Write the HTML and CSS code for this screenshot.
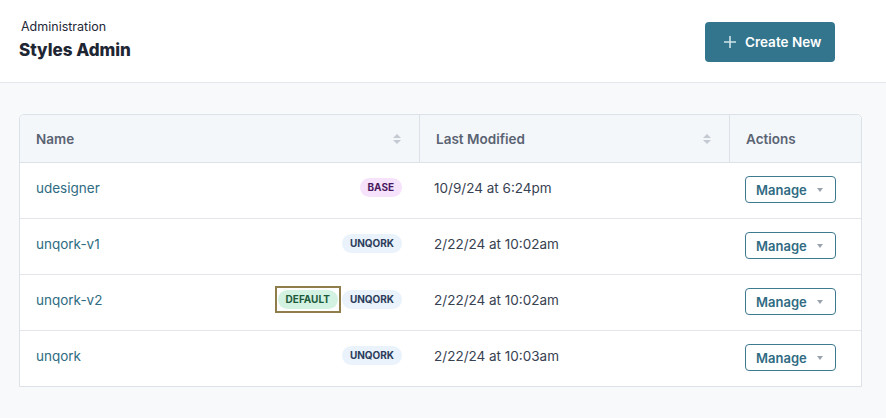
FILE: index.html
```html
<!DOCTYPE html>
<html>
<head>
    <meta charset="UTF-8">
    <title>Styles Admin</title>
    <link rel="stylesheet" href="styles.css">
</head>
<body>
<header class="page-header">
    <div class="titles">
        <div class="eyebrow">Administration</div>
        <h1>Styles Admin</h1>
    </div>
    <button class="btn-create">
        <svg width="14" height="14" viewBox="0 0 14 14"><path d="M7 1v12M1 7h12" stroke="#cfe3ea" stroke-width="1.6" fill="none"/></svg>
        Create New
    </button>
</header>

<main class="content">
    <table class="grid">
        <colgroup>
            <col class="col-name">
            <col class="col-date">
            <col class="col-actions">
        </colgroup>
        <thead>
            <tr>
                <th><span class="th-inner">Name <i class="sort"></i></span></th>
                <th><span class="th-inner">Last Modified <i class="sort"></i></span></th>
                <th>Actions</th>
            </tr>
        </thead>
        <tbody>
            <tr>
                <td><div class="name-cell"><a href="#">udesigner</a><span class="tags"><span class="tag tag-base">BASE</span></span></div></td>
                <td class="date">10/9/24 at 6:24pm</td>
                <td><button class="btn-manage">Manage <i class="caret"></i></button></td>
            </tr>
            <tr>
                <td><div class="name-cell"><a href="#">unqork-v1</a><span class="tags"><span class="tag tag-unqork">UNQORK</span></span></div></td>
                <td class="date">2/22/24 at 10:02am</td>
                <td><button class="btn-manage">Manage <i class="caret"></i></button></td>
            </tr>
            <tr>
                <td><div class="name-cell"><a href="#">unqork-v2</a><span class="tags"><span class="focus"><span class="tag tag-default">DEFAULT</span></span><span class="tag tag-unqork">UNQORK</span></span></div></td>
                <td class="date">2/22/24 at 10:02am</td>
                <td><button class="btn-manage">Manage <i class="caret"></i></button></td>
            </tr>
            <tr>
                <td><div class="name-cell"><a href="#">unqork</a><span class="tags"><span class="tag tag-unqork">UNQORK</span></span></div></td>
                <td class="date">2/22/24 at 10:03am</td>
                <td><button class="btn-manage">Manage <i class="caret"></i></button></td>
            </tr>
        </tbody>
    </table>
</main>
</body>
</html>
```

FILE: styles.css
```css
html, body {
    margin: 0;
    height: 100%;
}

body {
    font-family: Inter, "Noto Sans", sans-serif;
    color: #1f2937;
    background-color: #f8f9fb;
}

.page-header {
    display: flex;
    justify-content: space-between;
    align-items: center;
    height: 82px;
    padding: 0 51px 0 19px;
    background-color: #ffffff;
    border-bottom: 1px solid #e5e8ec;
}

.eyebrow {
    font-size: 12.5px;
    color: #1f2937;
    padding-left: 2px;
    margin-top: -4px;
}

h1 {
    margin: 6px 0 0;
    font-size: 17px;
    font-weight: 800;
    color: #1e2633;
}

.btn-create {
    display: flex;
    align-items: center;
    gap: 8px;
    height: 40px;
    width: 130px;
    padding: 0 0 0 18px;
    margin-top: 1px;

    font-family: inherit;
    font-size: 13.5px;
    font-weight: 600;
    color: #ffffff;
    border: none;
    border-radius: 4px;
    background-color: #33758d;
}

.content {
    padding: 31px 24px 0 19px;
}

.grid {
    width: 843px;
    border-collapse: separate;
    border-spacing: 0;
    background-color: #ffffff;
    border: 1px solid #dde2e8;
    border-radius: 5px 5px 0 0;
    font-size: 13.5px;
}

.col-name { width: 400px; }
.col-date { width: 311px; }
.col-actions { width: 132px; }

th {
    height: 47px;
    padding: 0 16px;
    text-align: left;
    font-weight: 600;
    color: #596372;
    background-color: #f4f7fa;
    border-bottom: 1px solid #dde2e8;
}

th + th {
    border-left: 1px solid #dde2e8;
}

th:first-child {
    border-top-left-radius: 5px;
}

th:last-child {
    border-top-right-radius: 5px;
}

.th-inner {
    display: flex;
    justify-content: space-between;
    align-items: center;
}

.sort {
    position: relative;
    width: 8px;
    height: 10px;
    margin-right: 2px;
}

.sort::before,
.sort::after {
    content: "";
    position: absolute;
    left: 0;
    border-left: 4px solid transparent;
    border-right: 4px solid transparent;
}

.sort::before {
    top: 0;
    border-bottom: 4px solid #c4cad2;
}

.sort::after {
    bottom: 0;
    border-top: 4px solid #c4cad2;
}

td {
    height: 49px;
    padding: 0 16px 6px;
    border-bottom: 1px solid #e2e6eb;
}

tbody tr:last-child td {
    border-bottom: none;
}

td:first-child {
    padding-right: 17px;
}

.name-cell {
    display: flex;
    justify-content: space-between;
    align-items: center;
}

.name-cell a {
    color: #2f6b82;
    text-decoration: none;
}

.tags {
    display: flex;
    align-items: center;
    gap: 1px;
}

.tag {
    display: inline-block;
    padding: 4px 8px;
    font-size: 10px;
    font-weight: 700;
    line-height: 11px;
    border-radius: 10px;
}

.tag-base {
    color: #4a1a5f;
    background-color: #f6e2fb;
}

.tag-unqork {
    color: #2c3c5a;
    background-color: #eaf2fb;
}

.tag-default {
    color: #1d5a3a;
    background-color: #d3f2e2;
}

.focus {
    display: inline-block;
    padding: 2px 1px;
    border: 2px solid #8f7d4c;
}

.date {
    color: #374151;
    padding-left: 15px;
}

.btn-manage {
    display: flex;
    align-items: center;
    gap: 10px;
    height: 27px;
    padding: 0 12px 0 10px;
    margin-top: 4px;

    font-family: inherit;
    font-size: 13px;
    font-weight: 600;
    color: #2f6b82;
    border: 1px solid #3d7a90;
    border-radius: 4px;
    background-color: #ffffff;
}

.caret {
    width: 0;
    height: 0;
    margin-top: 1px;
    border-left: 3.5px solid transparent;
    border-right: 3.5px solid transparent;
    border-top: 4px solid #9aa3ad;
}
```
